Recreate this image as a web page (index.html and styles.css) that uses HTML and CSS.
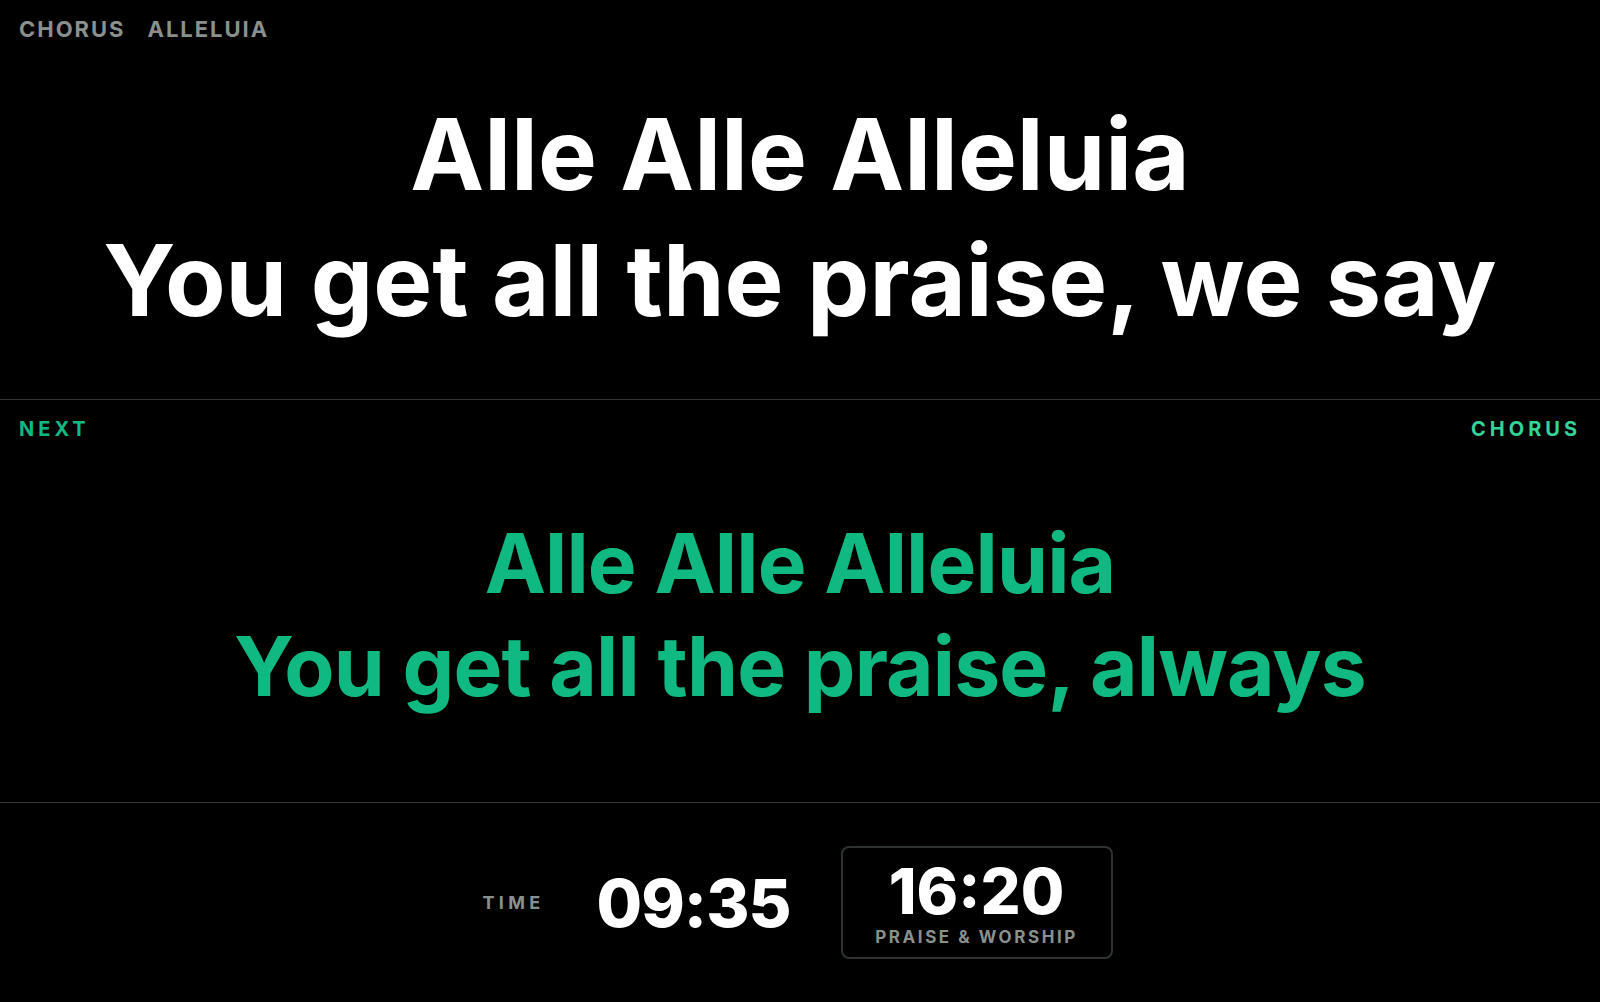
FILE: index.html
```html
<!DOCTYPE html>
<html lang="en">
<head>
<meta charset="utf-8">
<title>Stage display</title>
<link rel="stylesheet" href="styles.css">
</head>
<body>
<main class="stage">
  <section class="current">
    <header class="current-meta">
      <span class="meta-item">CHORUS</span>
      <span class="meta-item">ALLELUIA</span>
    </header>
    <div class="lyrics lyrics-current">
      <div class="line">Alle Alle Alleluia</div>
      <div class="line">You get all the praise, we say</div>
    </div>
  </section>
  <section class="next">
    <header class="next-meta">
      <span class="next-label">NEXT</span>
      <span class="next-section">CHORUS</span>
    </header>
    <div class="lyrics lyrics-next">
      <div class="line">Alle Alle Alleluia</div>
      <div class="line">You get all the praise, always</div>
    </div>
  </section>
  <footer class="status">
    <span class="time-label">TIME</span>
    <span class="clock">09:35</span>
    <div class="countdown">
      <span class="countdown-time">16:20</span>
      <span class="countdown-label">PRAISE &amp; WORSHIP</span>
    </div>
  </footer>
</main>
</body>
</html>
```
FILE: styles.css
```css
html, body {
  margin: 0;
  padding: 0;
  background: #000;
  height: 100%;
}
body {
  font-family: Inter, "Noto Sans", sans-serif;
  color: #fff;
}
.stage {
  display: flex;
  flex-direction: column;
  height: 1002px;
  width: 1600px;
}
.current {
  display: flex;
  flex-direction: column;
  border-bottom: 1px solid #333638;
  box-sizing: border-box;
  height: 400px;
}
.current-meta {
  display: flex;
  gap: 22px;
  padding: 16px 19px 0;
  font-size: 22px;
  font-weight: 700;
  letter-spacing: 0.09em;
  color: #8a908e;
  line-height: 26px;
}
.lyrics {
  flex: 1;
  display: flex;
  flex-direction: column;
  justify-content: center;
  align-items: center;
  text-align: center;
  font-weight: 700;
}
.lyrics-current {
  font-size: 99px;
  line-height: 126px;
  padding-bottom: 8px;
}
.next {
  height: 403px;
  box-sizing: border-box;
  border-bottom: 1px solid #333638;
  display: flex;
  flex-direction: column;
}
.next-meta {
  display: flex;
  justify-content: space-between;
  padding: 14px 19px 0;
  font-size: 20px;
  font-weight: 700;
  letter-spacing: 0.2em;
  line-height: 30px;
}
.next-label { color: #10b981; }
.next-section { color: #34d399; }
.lyrics-next {
  font-size: 82px;
  line-height: 103px;
  color: #10b981;
  letter-spacing: -0.01em;
  padding-bottom: 16px;
}
.status {
  flex: 1;
  display: flex;
  align-items: center;
  justify-content: center;
  padding-right: 5px;
}
.time-label {
  font-size: 18px;
  font-weight: 700;
  letter-spacing: 0.24em;
  color: #8a908e;
  margin-right: 52px;
}
.clock {
  font-size: 66px;
  font-weight: 800;
  letter-spacing: -0.015em;
  margin-right: 50px;
}
.countdown {
  width: 272px;
  height: 113px;
  box-sizing: border-box;
  border: 2px solid #2f3233;
  border-radius: 8px;
  display: flex;
  flex-direction: column;
  align-items: center;
  justify-content: center;
}
.countdown-time {
  font-size: 63px;
  font-weight: 800;
  line-height: 66px;
}
.countdown-label {
  font-size: 17px;
  font-weight: 700;
  letter-spacing: 0.15em;
  color: #8a908e;
  line-height: 22px;
  margin-top: 2px;
}
```
